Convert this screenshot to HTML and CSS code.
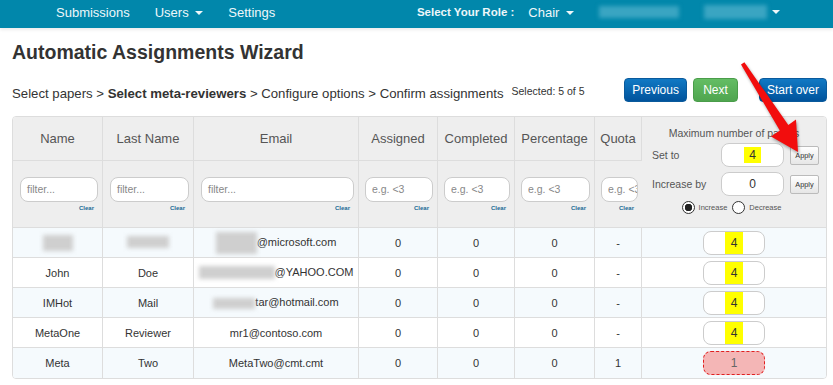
FILE: index.html
```html
<!DOCTYPE html>
<html lang="en">
<head>
  <meta charset="UTF-8" />
  <title>Automatic Assignments Wizard</title>
  <link rel="stylesheet" href="styles.css">
</head>
<body>
  <nav class="topbar">
    <div class="nav-left">
      <a>Submissions</a>
      <a>Users <span class="caret"></span></a>
      <a>Settings</a>
    </div>
    <div class="nav-right">
      <span class="role-label">Select Your Role :</span>
      <a class="role">Chair <span class="caret"></span></a>
      <span class="nav-blur blur-a"></span>
      <span class="nav-blur blur-b"></span>
      <span class="caret"></span>
    </div>
  </nav>

  <div class="page">
    <h1>Automatic Assignments Wizard</h1>

    <div class="wizard-bar">
      <div class="steps">Select papers &gt; <b>Select meta-reviewers</b> &gt; Configure options &gt; Confirm assignments</div>
      <div class="selected">Selected: 5 of 5</div>
      <div class="actions">
        <button class="btn btn-blue">Previous</button>
        <button class="btn btn-green">Next</button>
        <button class="btn btn-blue btn-start">Start over</button>
      </div>
    </div>

    <div class="table-wrap">
      <table>
        <colgroup>
          <col style="width:90px"><col style="width:91px"><col style="width:165px"><col style="width:79px">
          <col style="width:77px"><col style="width:80px"><col style="width:47px"><col style="width:184px">
        </colgroup>
        <thead>
          <tr class="head-row">
            <th>Name</th>
            <th>Last Name</th>
            <th>Email</th>
            <th>Assigned</th>
            <th>Completed</th>
            <th>Percentage</th>
            <th>Quota</th>
            <th rowspan="2" class="max-cell">
              <div class="max-title">Maximum number of papers</div>
              <div class="max-row">
                <span class="max-label">Set to</span>
                <span class="num-box"><span class="hl">4</span></span>
                <button class="apply">Apply</button>
              </div>
              <div class="max-row">
                <span class="max-label">Increase by</span>
                <span class="num-box">0</span>
                <button class="apply">Apply</button>
              </div>
              <div class="radios">
                <span class="radio checked"></span><span class="radio-label">Increase</span>
                <span class="radio"></span><span class="radio-label">Decrease</span>
              </div>
            </th>
          </tr>
          <tr class="filter-row">
            <th><div class="filter">filter...</div><div class="clear">Clear</div></th>
            <th><div class="filter">filter...</div><div class="clear">Clear</div></th>
            <th><div class="filter">filter...</div><div class="clear">Clear</div></th>
            <th><div class="filter">e.g. &lt;3</div><div class="clear">Clear</div></th>
            <th><div class="filter">e.g. &lt;3</div><div class="clear">Clear</div></th>
            <th><div class="filter">e.g. &lt;3</div><div class="clear">Clear</div></th>
            <th><div class="filter">e.g. &lt;3</div><div class="clear">Clear</div></th>
          </tr>
        </thead>
        <tbody>
          <tr>
            <td><span class="blur b-name"></span></td>
            <td><span class="blur b-last"></span></td>
            <td><span class="blur b-mail1"></span>@microsoft.com</td>
            <td>0</td><td>0</td><td>0</td><td>-</td>
            <td><span class="cap-box"><span class="hl">4</span></span></td>
          </tr>
          <tr>
            <td>John</td>
            <td>Doe</td>
            <td><span class="blur b-mail2"></span>@YAHOO.COM</td>
            <td>0</td><td>0</td><td>0</td><td>-</td>
            <td><span class="cap-box"><span class="hl">4</span></span></td>
          </tr>
          <tr>
            <td>IMHot</td>
            <td>Mail</td>
            <td><span class="blur b-mail3"></span>tar@hotmail.com</td>
            <td>0</td><td>0</td><td>0</td><td>-</td>
            <td><span class="cap-box"><span class="hl">4</span></span></td>
          </tr>
          <tr>
            <td>MetaOne</td>
            <td>Reviewer</td>
            <td>mr1@contoso.com</td>
            <td>0</td><td>0</td><td>0</td><td>-</td>
            <td><span class="cap-box"><span class="hl">4</span></span></td>
          </tr>
          <tr>
            <td>Meta</td>
            <td>Two</td>
            <td>MetaTwo@cmt.cmt</td>
            <td>0</td><td>0</td><td>0</td><td>1</td>
            <td><span class="cap-box over">1</span></td>
          </tr>
        </tbody>
      </table>
    </div>
  </div>

  <svg class="callout" width="833" height="385" viewBox="0 0 833 385">
    <polygon points="744.4,62.2 788.3,125.0 796,119.5 798,152 771,136.5 779.8,130.6 741,64.4" fill="#f20d0d" />
  </svg>
</body>
</html>
```

FILE: styles.css
```css
body {
  margin: 0;
  font-family: "Liberation Sans", Arial, sans-serif;
  color: #333;
  background: #fff;
}
.topbar {
  height: 28px;
  background: #0187ab;
  display: flex;
  align-items: center;
  padding-left: 56px;
  padding-bottom: 4px;
  box-sizing: border-box;
  font-size: 13px;
  color: #eef7fa;
  box-shadow: 0 2px 3px rgba(0, 0, 0, 0.08);
}
.nav-left {
  display: flex;
  gap: 25px;
}
.nav-right {
  display: flex;
  align-items: center;
  margin-left: auto;
  padding-right: 53px;
}
.role-label {
  font-weight: bold;
  font-size: 11.5px;
}
.role {
  margin-left: 14px;
}
.caret {
  display: inline-block;
  width: 0;
  height: 0;
  border-top: 4px solid #eef7fa;
  border-left: 4px solid transparent;
  border-right: 4px solid transparent;
  vertical-align: middle;
  margin-left: 3px;
}
.nav-blur {
  display: inline-block;
  background: #3aa5c2;
  filter: blur(2px);
}
.blur-a {
  width: 80px;
  height: 12px;
  margin-left: 25px;
}
.blur-b {
  width: 63px;
  height: 14px;
  margin-left: 25px;
  margin-right: 2px;
}
.page {
  padding: 0 6px 0 12px;
}
h1 {
  margin: 12px 0 0;
  font-size: 19.5px;
  line-height: 24px;
  color: #333;
}
.wizard-bar {
  display: flex;
  align-items: center;
  height: 24px;
  margin-top: 14px;
  margin-bottom: 14px;
}
.steps {
  font-size: 13.2px;
  margin-top: 7px;
}
.selected {
  font-size: 10.5px;
  margin-left: 8px;
  margin-top: 2px;
}
.actions {
  margin-left: auto;
  display: flex;
}
.btn {
  height: 24px;
  border-radius: 4px;
  font-family: inherit;
  font-size: 12px;
  color: #fff;
  padding: 0 7px;
  border: 1px solid;
  cursor: pointer;
}
.btn-blue {
  background: linear-gradient(#1179c4, #00539c);
  border-color: #0a5a9c;
}
.btn-green {
  background: linear-gradient(#64bd64, #4fa54f);
  border-color: #4a9d4a;
  margin-left: 6px;
  width: 45px;
}
.btn-start {
  margin-left: 21px;
}
.table-wrap {
  border: 1px solid #ddd;
  border-radius: 4px;
  overflow: hidden;
  width: 815px;
  box-sizing: border-box;
}
table {
  border-collapse: separate;
  border-spacing: 0;
  table-layout: fixed;
  width: 813px;
}
th, td {
  box-sizing: border-box;
  border-right: 1px solid #ddd;
  border-bottom: 1px solid #ddd;
  padding: 0;
  text-align: center;
}
th:last-child, td:last-child {
  border-right: none;
}
tbody tr:last-child td {
  border-bottom: none;
}
th {
  background: #eee;
  font-weight: normal;
  font-size: 13px;
  color: #555;
}
.head-row {
  height: 44px;
}
.filter-row {
  height: 67px;
}
.filter-row th {
  vertical-align: top;
  padding: 16px 4px 0 7px;
}
.filter-row th:nth-child(n+4) {
  padding-left: 6px;
}
.filter {
  height: 25px;
  line-height: 23px;
  box-sizing: border-box;
  border: 1px solid #ccc;
  border-radius: 8px;
  background: #fff;
  text-align: left;
  padding-left: 6px;
  font-size: 10.5px;
  color: #888;
  white-space: nowrap;
  overflow: hidden;
}
.clear {
  text-align: right;
  font-size: 6px;
  font-weight: bold;
  color: #1a6a95;
  margin-top: 3px;
  margin-right: 4px;
}
.max-cell {
  vertical-align: top;
  padding: 10px 0 0 10px;
}
.max-title {
  font-size: 10.5px;
  color: #555;
  margin-right: 10px;
  margin-bottom: 4px;
}
.max-row {
  display: flex;
  align-items: center;
  margin-bottom: 5px;
}
.max-label {
  width: 69px;
  text-align: left;
  font-size: 10.5px;
  color: #555;
}
.num-box {
  width: 63px;
  height: 24px;
  box-sizing: border-box;
  border: 1px solid #ccc;
  border-radius: 8px;
  background: #fff;
  font-size: 12px;
  line-height: 22px;
  color: #333;
}
.num-box .hl {
  padding: 1px 5px;
}
.apply {
  margin-left: 6px;
  width: 29px;
  height: 19px;
  padding: 0;
  font-family: inherit;
  font-size: 7.3px;
  color: #333;
  background: linear-gradient(#fff, #e6e6e6);
  border: 1px solid #bbb;
  border-radius: 2px;
}
.radios {
  display: flex;
  align-items: center;
  justify-content: center;
  margin-right: 10px;
  margin-top: 3px;
}
.radio {
  width: 13px;
  height: 13px;
  box-sizing: border-box;
  border: 1px solid #333;
  border-radius: 50%;
  background: #fff;
}
.radio.checked {
  background: radial-gradient(circle, #222 0 3.5px, #fff 4px);
  border-width: 1.5px;
}
.radio-label {
  font-size: 7.5px;
  color: #555;
  margin: 0 5px 0 4px;
}
.hl {
  background: #ffff00;
}
tbody tr {
  height: 30px;
}
tbody tr:nth-child(odd) td {
  background: #f5fafd;
}
td {
  font-size: 11px;
  color: #333;
  white-space: nowrap;
}
.blur {
  display: inline-block;
  vertical-align: middle;
  background: #cfcfcf;
  filter: blur(2px);
}
.b-name {
  width: 30px;
  height: 16px;
}
.b-last {
  width: 42px;
  height: 12px;
  margin-top: -4px;
}
.b-mail1 {
  width: 41px;
  height: 22px;
}
.b-mail2 {
  width: 76px;
  height: 13px;
}
.b-mail3 {
  width: 42px;
  height: 11px;
}
.cap-box {
  display: inline-block;
  width: 62px;
  height: 24px;
  box-sizing: border-box;
  border: 1px solid #ccc;
  border-radius: 8px;
  background: #fff;
  font-size: 12px;
  line-height: 22px;
  vertical-align: middle;
}
.cap-box .hl {
  display: inline-block;
  width: 18px;
  height: 22px;
}
.cap-box.over {
  background: #f4b6b6;
  border: 1px dashed #e02020;
  color: #666;
}
.callout {
  position: absolute;
  left: 0;
  top: 0;
  pointer-events: none;
  filter: drop-shadow(1px 2px 1.5px rgba(0, 0, 0, 0.35));
}
```
